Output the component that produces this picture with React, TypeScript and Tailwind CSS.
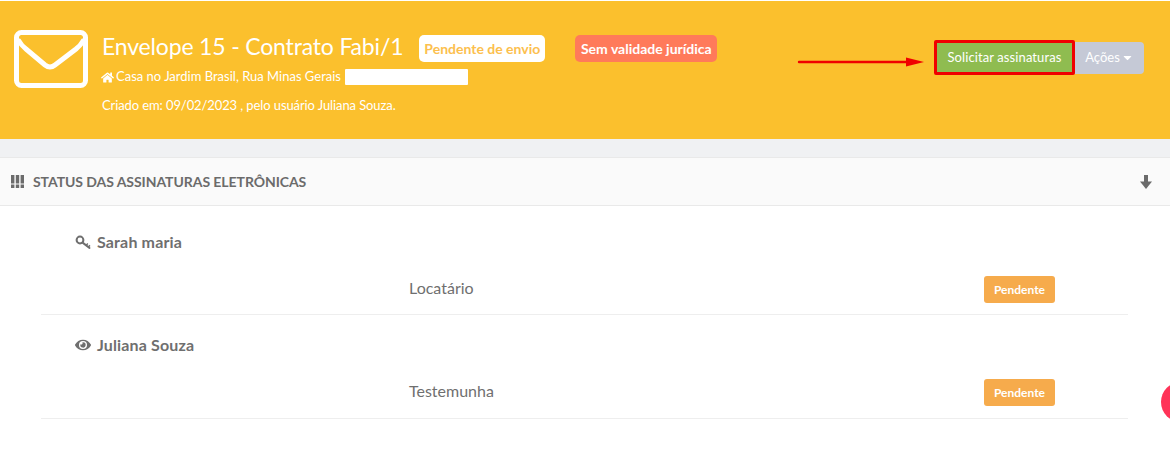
import { FaEye, FaHome, FaCaretDown } from "react-icons/fa";

function Envelope() {
  return (
    <svg width="74" height="58" viewBox="0 0 74 58" fill="none" className="shrink-0">
      <rect x="2.5" y="2.5" width="69" height="53" rx="5" stroke="#fff" strokeWidth="5" fill="none" />
      <path d="M5 11 Q7 15 12 19 L31 35 Q36 39 41 35 L62 19 Q67 15 69 11" stroke="#fff" strokeWidth="5" fill="none" strokeLinecap="round" />
    </svg>
  );
}

function Grid3() {
  return (
    <svg width="13" height="13" viewBox="0 0 13 13" fill="#6b6b6b" className="shrink-0">
      <rect x="0" y="0" width="3.4" height="8.5" />
      <rect x="4.8" y="0" width="3.4" height="8.5" />
      <rect x="9.6" y="0" width="3.4" height="8.5" />
      <rect x="0" y="9.5" width="3.4" height="3.5" />
      <rect x="4.8" y="9.5" width="3.4" height="3.5" />
      <rect x="9.6" y="9.5" width="3.4" height="3.5" />
    </svg>
  );
}

function KeyIcon() {
  return (
    <svg width="16" height="15" viewBox="0 0 16 15" fill="none" stroke="#6f6f6f" className="shrink-0">
      <circle cx="5" cy="5" r="3.4" strokeWidth="2" />
      <path d="M7.6 7.6 L14.5 13" strokeWidth="2" strokeLinecap="round" />
      <path d="M11 10.5 L12.8 8.6 M13.2 12 L15 10.4" strokeWidth="1.5" />
    </svg>
  );
}

function ArrowDownIcon() {
  return (
    <svg width="12" height="14" viewBox="0 0 12 14" fill="#6b6b6b" className="shrink-0">
      <rect x="4" y="0" width="4" height="7" />
      <path d="M0 6.5 H12 L6 14 Z" />
    </svg>
  );
}

function Signer({ icon, name, role, first }: { icon: React.ReactNode; name: string; role: string; first?: boolean }) {
  return (
    <div className={`border-b border-[#eeeeee] pl-[34px] ${first ? "h-[109px] pt-[26px]" : "h-[104px] pt-[20px]"}`}>
      <div className="flex h-[20px] items-center gap-[6px] text-[16px] font-bold tracking-[0.15px] text-[#6f6f6f]">
        {icon}
        <span>{name}</span>
      </div>
      <div className="mt-[24px] flex h-[27px] items-center pr-[73px]">
        <span className="mb-[4px] ml-[334px] flex-1 text-[16px] text-[#6f6f6f]">{role}</span>
        <span className="flex h-[27px] w-[71px] items-center justify-center rounded-[3px] bg-[#f6ab4c] text-[12px] font-bold text-white">
          Pendente
        </span>
      </div>
    </div>
  );
}

export default function App() {
  return (
    <div className="relative h-[460px] w-[1170px] overflow-hidden bg-white font-['Lato','Open_Sans',sans-serif]">
      <header className="mt-px flex h-[138px] items-start bg-[#fbc02d] pl-[14px] pr-[26px] text-white">
        <div className="mt-[29px]">
          <Envelope />
        </div>
        <div className="ml-[14px] mt-[32px] flex-1">
          <div className="flex items-center">
            <h1 className="pb-[4px] text-[23px] leading-[26px] font-normal tracking-[-0.17px] whitespace-nowrap">Envelope 15 - Contrato Fabi/1</h1>
            <span className="ml-[16px] flex h-[27px] w-[126px] items-center justify-center rounded-[5px] bg-white text-[14px] font-bold text-[#fcc04e]">
              Pendente de envio
            </span>
            <span className="ml-[30px] flex h-[27px] w-[142px] items-center justify-center rounded-[5px] bg-[#ff7a5a] text-[14px] font-bold text-white">
              Sem validade jurídica
            </span>
          </div>
          <div className="mt-[5px] flex h-[18px] items-center text-[13px]">
            <FaHome className="-ml-px mr-[2px] text-[13px]" />
            <span>Casa no Jardim Brasil, Rua Minas Gerais</span>
            <span className="ml-[4px] h-[16px] w-[123px] rounded-[1px] bg-white" />
          </div>
          <p className="mt-[10px] text-[13px] leading-[18px] tracking-[-0.1px]">Criado em: 09/02/2023 , pelo usuário Juliana Souza.</p>
        </div>
        <div className="mt-[39px] flex items-center">
          <svg width="130" height="12" viewBox="0 0 130 12" className="mr-[7px] mt-[9px] shrink-0">
            <line x1="2" y1="6" x2="112" y2="6" stroke="#f00000" strokeWidth="2.4" strokeLinecap="round" />
            <path d="M109 1.5 L127 6 L109 10.5 Z" fill="#f00000" />
          </svg>
          <button className="h-[35px] w-[141px] rounded-[2px] border-[3px] border-[#f00000] bg-[#8fbc50] text-[13px] tracking-[0.1px] text-white">
            Solicitar assinaturas
          </button>
          <button className="flex h-[32px] w-[69px] items-center justify-center gap-[1px] rounded-r-[4px] bg-[#c5c9d6] text-[13px] text-white">
            Ações
            <FaCaretDown className="text-[13px]" />
          </button>
        </div>
      </header>

      <div className="h-[18px] bg-[#f0f1f3]" />

      <section>
        <div className="flex h-[49px] items-center border-y border-[#e9e9e9] bg-[#fafafa] pl-[11px] pr-[18px] text-[#6b6b6b]">
          <Grid3 />
          <h2 className="ml-[9px] flex-1 text-[14px] font-bold tracking-[-0.06px]">STATUS DAS ASSINATURAS ELETRÔNICAS</h2>
          <ArrowDownIcon />
        </div>
        <div className="ml-[41px] w-[1087px]">
          <Signer first icon={<KeyIcon />} name="Sarah maria" role="Locatário" />
          <Signer icon={<FaEye className="text-[16px] text-[#6f6f6f]" />} name="Juliana Souza" role="Testemunha" />
        </div>
      </section>

      <div className="absolute left-[1161px] top-[382px] h-[40px] w-[40px] rounded-full bg-[#ff3358]" />
    </div>
  );
}
